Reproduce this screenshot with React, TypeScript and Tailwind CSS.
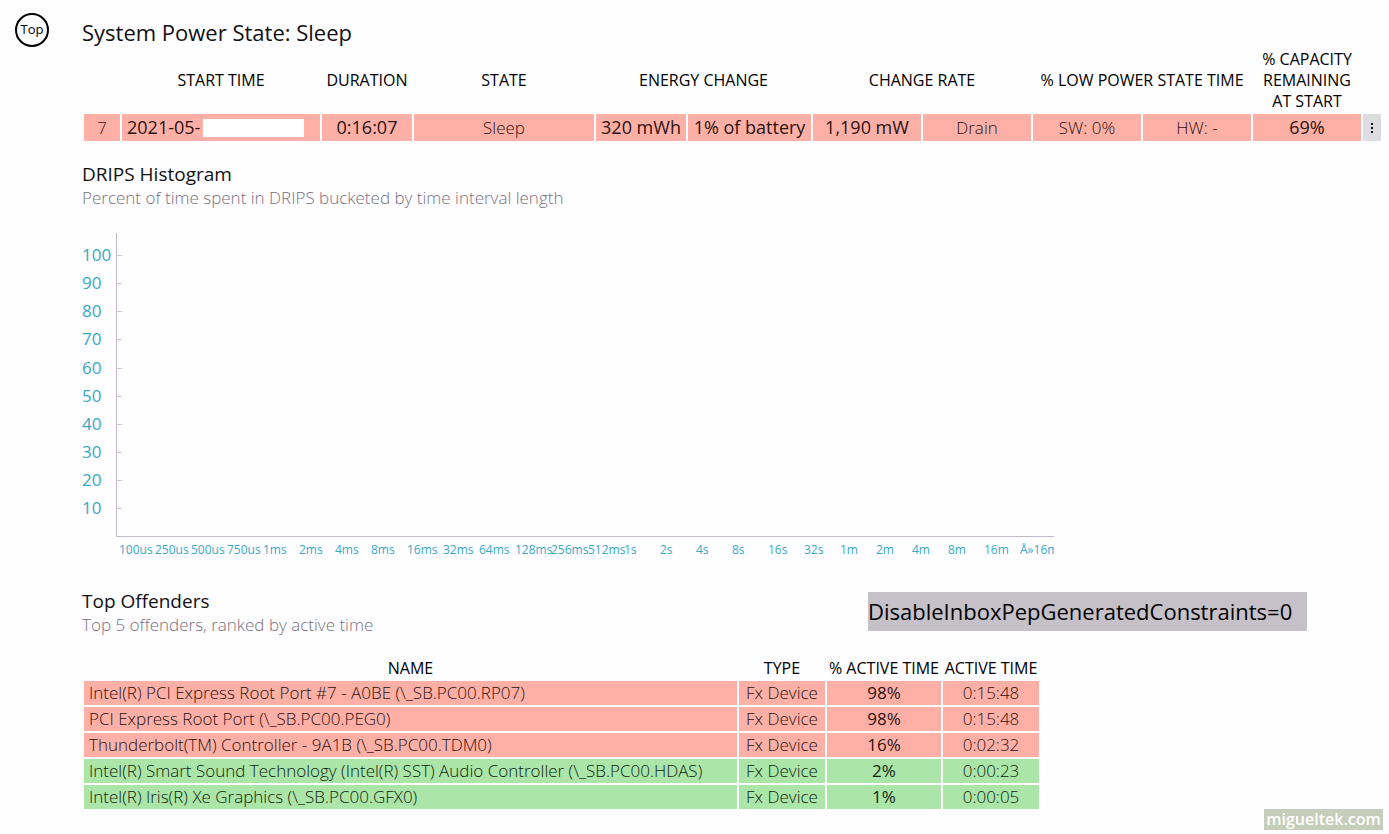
const buckets = [
  '100us', '250us', '500us', '750us', '1ms', '2ms', '4ms', '8ms', '16ms', '32ms', '64ms', '128ms', '256ms',
  '512ms', '1s', '2s', '4s', '8s', '16s', '32s', '1m', '2m', '4m', '8m', '16m', 'Å»16m',
];

const percents = [100, 90, 80, 70, 60, 50, 40, 30, 20, 10];

const offenders = [
  { name: 'Intel(R) PCI Express Root Port #7 - A0BE (\\_SB.PC00.RP07)', percent: '98%', time: '0:15:48', high: true },
  { name: 'PCI Express Root Port (\\_SB.PC00.PEG0)', percent: '98%', time: '0:15:48', high: true },
  { name: 'Thunderbolt(TM) Controller - 9A1B (\\_SB.PC00.TDM0)', percent: '16%', time: '0:02:32', high: true },
  {
    name: 'Intel(R) Smart Sound Technology (Intel(R) SST) Audio Controller (\\_SB.PC00.HDAS)',
    percent: '2%',
    time: '0:00:23',
    high: false,
  },
  { name: 'Intel(R) Iris(R) Xe Graphics (\\_SB.PC00.GFX0)', percent: '1%', time: '0:00:05', high: false },
];

function SessionTable() {
  return (
    <table className="w-full table-fixed border-separate border-spacing-[2px] text-center">
      <colgroup>
        <col className="w-[36px]" />
        <col className="w-[198px]" />
        <col className="w-[90px]" />
        <col className="w-[180px]" />
        <col className="w-[90px]" />
        <col className="w-[123px]" />
        <col className="w-[108px]" />
        <col className="w-[108px]" />
        <col className="w-[108px]" />
        <col className="w-[108px]" />
        <col className="w-[108px]" />
        <col className="w-[18px]" />
      </colgroup>
      <thead className="text-base leading-[21px] whitespace-nowrap text-black">
        <tr>
          <td />
          <th className="font-normal">START TIME</th>
          <th className="font-normal">DURATION</th>
          <th className="font-normal">STATE</th>
          <th className="font-normal" colSpan={2}>ENERGY CHANGE</th>
          <th className="font-normal" colSpan={2}>CHANGE RATE</th>
          <th className="font-normal" colSpan={2}>% LOW POWER STATE TIME</th>
          <th className="font-normal">
            % CAPACITY
            <br />
            REMAINING
            <br />
            AT START
          </th>
          <td />
        </tr>
      </thead>
      <tbody className="text-lg leading-[27px] whitespace-nowrap">
        <tr className="text-[#2a1210]">
          <td className="bg-[#ffb0a6] text-[17px] font-light">7</td>
          <td className="bg-[#ffb0a6] pr-4 pl-[5px]">
            <div className="flex items-center justify-between">
              2021-05-
              <span className="h-[18px] w-[101px] bg-white" />
            </div>
          </td>
          <td className="bg-[#ffb0a6]">0:16:07</td>
          <td className="bg-[#ffb0a6] text-[17px] font-light">Sleep</td>
          <td className="bg-[#ffb0a6]">320 mWh</td>
          <td className="bg-[#ffb0a6]">1% of battery</td>
          <td className="bg-[#ffb0a6]">1,190 mW</td>
          <td className="bg-[#ffb0a6] text-[17px] font-light">Drain</td>
          <td className="bg-[#ffb0a6] text-[17px] font-light">SW: 0%</td>
          <td className="bg-[#ffb0a6] text-[17px] font-light">HW: -</td>
          <td className="bg-[#ffb0a6]">69%</td>
          <td className="bg-[#dddddf]">
            <button type="button" aria-label="More" className="flex w-full items-center justify-center">
              <svg width="4" height="12" viewBox="0 0 4 12" fill="#111">
                <rect x="1" y="1" width="2" height="2" />
                <rect x="1" y="5" width="2" height="2" />
                <rect x="1" y="9" width="2" height="2" />
              </svg>
            </button>
          </td>
        </tr>
      </tbody>
    </table>
  );
}

function Histogram() {
  return (
    <svg width="972" height="340" viewBox="0 0 972 340" className="block overflow-hidden" role="img" aria-label="DRIPS Histogram">
      <path d="M34.5 11V314.5H972" fill="none" stroke="#c3b8c9" />
      {percents.map((value, i) => (
        <g key={value}>
          <path d={`M35 ${33.5 + Math.round(i * 28.15)}h5`} stroke="#cfc6d6" />
          <text x="0" y={39 + Math.round(i * 28.15)} fontSize="17" fill="#38a9c4">
            {value}
          </text>
        </g>
      ))}
      {buckets.map((label, i) => (
        <text key={label} x={37 + Math.round(i * 36.04)} y="332" fontSize="12" fill="#38a9c4">
          {label}
        </text>
      ))}
    </svg>
  );
}

function OffendersTable() {
  return (
    <table className="w-[959px] max-w-full table-fixed border-separate border-spacing-[2px] text-center whitespace-nowrap">
      <colgroup>
        <col className="w-[653px]" />
        <col className="w-[86px]" />
        <col className="w-[114px]" />
        <col className="w-[96px]" />
      </colgroup>
      <thead className="text-base leading-[21px] text-black">
        <tr>
          <th className="font-normal">NAME</th>
          <th className="font-normal">TYPE</th>
          <th className="font-normal">% ACTIVE TIME</th>
          <th className="font-normal">ACTIVE TIME</th>
        </tr>
      </thead>
      <tbody className="text-[17px] leading-6">
        {offenders.map((row) => (
          <tr key={row.name} className={row.high ? 'bg-[#ffb0a6] text-[#2a1210]' : 'bg-[#abe5a8] text-[#10260f]'}>
            <td className="pl-[5px] text-left font-light">{row.name}</td>
            <td className="font-light">Fx Device</td>
            <td>{row.percent}</td>
            <td className="font-light">{row.time}</td>
          </tr>
        ))}
      </tbody>
    </table>
  );
}

export default function App() {
  return (
    <div className="relative flex min-h-screen bg-[#fefdff] font-['Open_Sans','Noto_Sans',sans-serif] text-[#111]">
      <nav className="w-[82px] shrink-0 pt-[13px] pl-[15px]">
        <a href="#top" className="flex size-[34px] items-center justify-center rounded-full border-2 border-black text-[13px] font-medium text-black">
          Top
        </a>
      </nav>
      <main id="top" className="min-w-0 flex-1 pt-[17px] pr-1.5">
        <h1 className="text-[22px] leading-[30px]">System Power State: Sleep</h1>
        <SessionTable />

        <section className="mt-[19px]">
          <h2 className="text-[19px] leading-6">DRIPS Histogram</h2>
          <p className="mb-3 text-[17px] leading-6 font-light text-[#77727c]">
            Percent of time spent in DRIPS bucketed by time interval length
          </p>
          <Histogram />
        </section>

        <section className="mt-[27px]">
          <div className="mb-[19px] flex items-start justify-between pr-[76px]">
            <div>
              <h2 className="text-[19px] leading-6">Top Offenders</h2>
              <p className="text-[17px] leading-6 font-light text-[#77727c]">Top 5 offenders, ranked by active time</p>
            </div>
            <p className="mt-[3px] w-[439px] bg-[#c6c1c8] text-[22px] leading-[39px] whitespace-nowrap text-black">
              DisableInboxPepGeneratedConstraints=0
            </p>
          </div>
          <OffendersTable />
        </section>
      </main>
      <a href="#top" className="absolute right-1.5 bottom-1 w-[119px] bg-[#c6cdbb] text-center text-base leading-[21px] font-semibold text-white">
        migueltek.com
      </a>
    </div>
  );
}
